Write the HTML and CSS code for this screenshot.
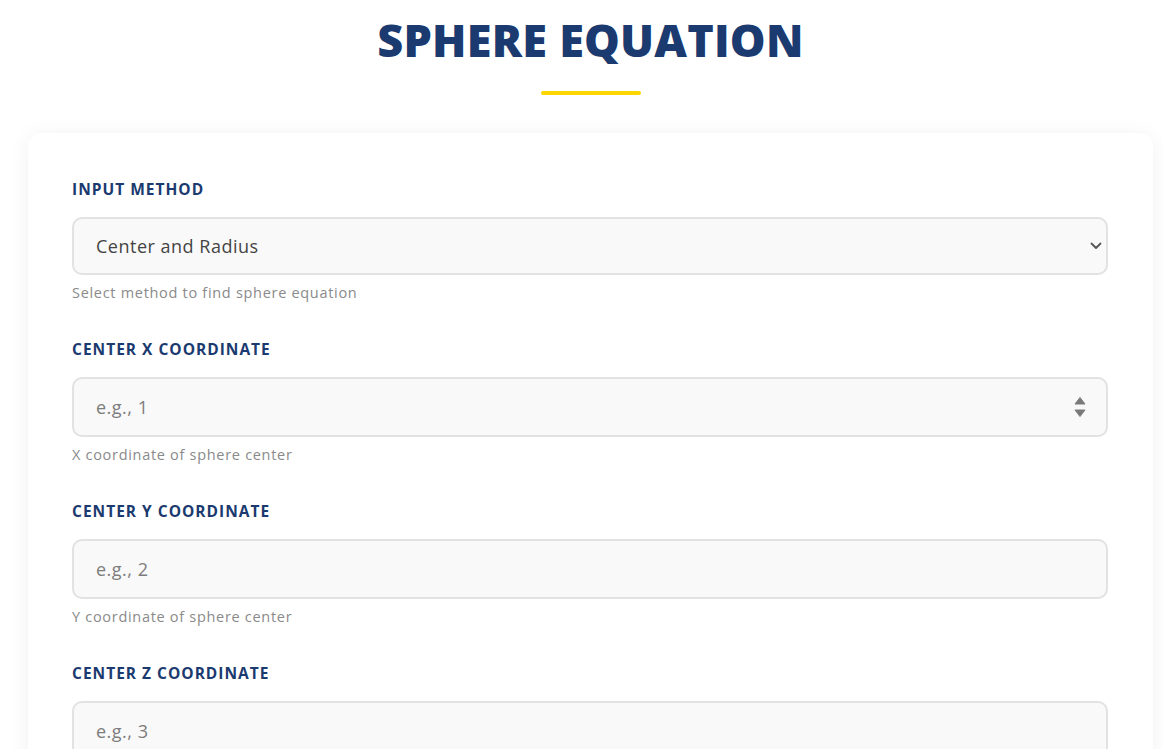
FILE: index.html
```html
<!DOCTYPE html>
<html lang="en">
<head>
<meta charset="utf-8">
<title>Sphere Equation</title>
<link rel="stylesheet" href="styles.css">
</head>
<body>
<main class="page">
  <header class="page-head">
    <h1 class="title">SPHERE EQUATION</h1>
    <div class="title-bar"></div>
  </header>

  <form class="card">
    <div class="field">
      <label class="field-label" for="method">INPUT METHOD</label>
      <div class="control-wrap">
        <select id="method" class="control control-select">
          <option>Center and Radius</option>
          <option>Four Points</option>
        </select>
        <svg class="chevron" width="12" height="8" viewBox="0 0 12 8" aria-hidden="true">
          <path d="M1.5 1.5 L6 6 L10.5 1.5" fill="none" stroke="#555" stroke-width="1.8" stroke-linecap="round" stroke-linejoin="round"/>
        </svg>
      </div>
      <p class="field-help">Select method to find sphere equation</p>
    </div>

    <div class="field">
      <label class="field-label" for="cx">CENTER X COORDINATE</label>
      <div class="control-wrap">
        <input id="cx" class="control control-input" type="number" placeholder="e.g., 1">
        <svg class="spinner" width="12" height="22" viewBox="0 0 12 22" aria-hidden="true">
          <path d="M6 1.5 L11 8 L1 8 Z" fill="#7a7a7a" stroke="#7a7a7a" stroke-width="1" stroke-linejoin="round"/>
          <path d="M1 14 L11 14 L6 20.5 Z" fill="#7a7a7a" stroke="#7a7a7a" stroke-width="1" stroke-linejoin="round"/>
        </svg>
      </div>
      <p class="field-help">X coordinate of sphere center</p>
    </div>

    <div class="field">
      <label class="field-label" for="cy">CENTER Y COORDINATE</label>
      <div class="control-wrap">
        <input id="cy" class="control control-input" type="number" placeholder="e.g., 2">
      </div>
      <p class="field-help">Y coordinate of sphere center</p>
    </div>

    <div class="field">
      <label class="field-label" for="cz">CENTER Z COORDINATE</label>
      <div class="control-wrap">
        <input id="cz" class="control control-input" type="number" placeholder="e.g., 3">
      </div>
      <p class="field-help">Z coordinate of sphere center</p>
    </div>
  </form>
</main>
</body>
</html>
```

FILE: styles.css
```css
* {
  box-sizing: border-box;
}

html,
body {
  margin: 0;
  padding: 0;
  background: #ffffff;
}

body {
  font-family: "Open Sans", "Noto Sans", sans-serif;
  color: #333333;
}

.page {
  padding: 0 10px 40px 28px;
}

.page-head {
  display: flex;
  flex-direction: column;
  align-items: center;
  padding-top: 14px;
}

.title {
  margin: 0;
  font-family: "Open Sans", sans-serif;
  font-size: 45px;
  font-weight: 800;
  line-height: 52px;
  letter-spacing: 0.2px;
  color: #1b3a6f;
}

.title-bar {
  width: 100px;
  height: 4px;
  margin-top: 25px;
  border-radius: 2px;
  background: #ffd700;
}

.card {
  margin-top: 38px;
  padding: 45px 45px 40px 44px;
  background: #ffffff;
  border-radius: 14px;
  box-shadow: 0 2px 22px rgba(0, 0, 0, 0.06);
}

.field {
  margin-bottom: 35px;
}

.field-label {
  display: block;
  margin-bottom: 17px;
  font-size: 15.5px;
  line-height: 22px;
  font-weight: 700;
  letter-spacing: 1px;
  color: #1b3a6f;
}

.control-wrap {
  position: relative;
}

.control {
  display: block;
  width: 100%;
  height: 60px;
  margin: 0;
  padding: 0 22px;
  font-family: inherit;
  font-size: 18px;
  letter-spacing: 0.5px;
  color: #444444;
  background: #f9f9f9;
  border: 2px solid #e2e2e2;
  border-radius: 10px;
  outline: none;
}

.control-select {
  height: 58px;
  appearance: none;
  -webkit-appearance: none;
}

.control-input {
  -moz-appearance: textfield;
}

.control-input::-webkit-outer-spin-button,
.control-input::-webkit-inner-spin-button {
  -webkit-appearance: none;
  margin: 0;
}

.control-input::placeholder {
  color: #7d7d7d;
}

.chevron {
  position: absolute;
  right: 6px;
  top: 25px;
}

.spinner {
  position: absolute;
  right: 22px;
  top: 19px;
}

.field-help {
  margin: 8px 0 0;
  font-size: 14.5px;
  line-height: 20px;
  letter-spacing: 0.7px;
  color: #8a8a8a;
}
```
